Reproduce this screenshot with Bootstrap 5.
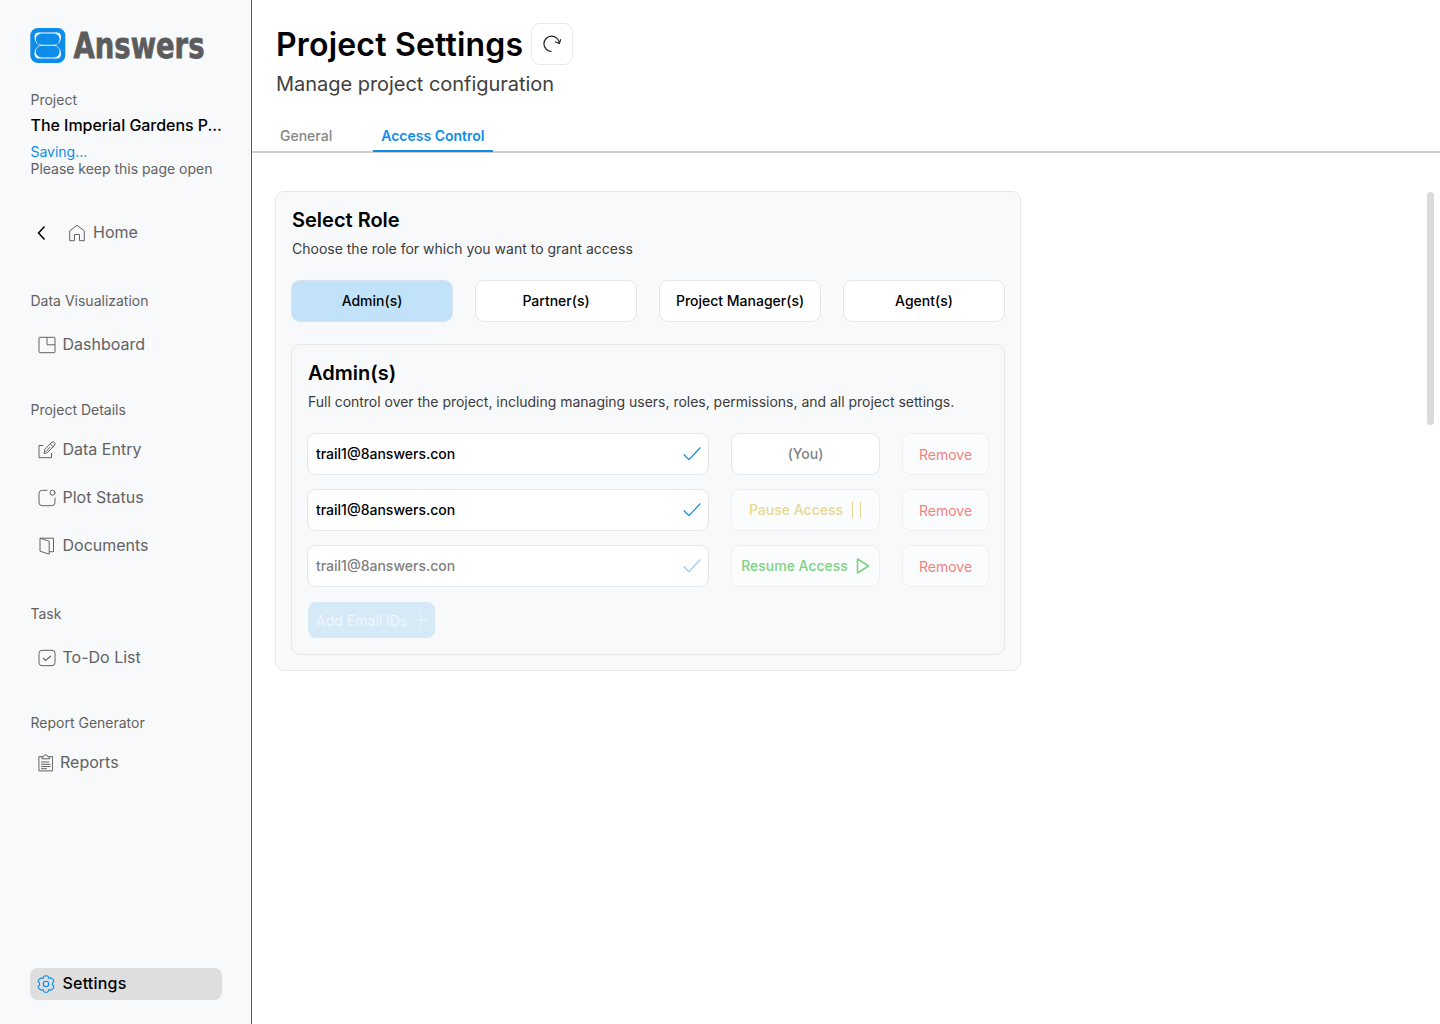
<!DOCTYPE html>
<html lang="en">
<head>
<meta charset="utf-8">
<meta name="viewport" content="width=device-width, initial-scale=1">
<title>Project Settings</title>
<link href="https://cdn.jsdelivr.net/npm/bootstrap@5.3.0/dist/css/bootstrap.min.css" rel="stylesheet">
<style>
body{font-family:Inter,"Liberation Sans",sans-serif;font-size:14px;color:#000;background:#fff;overflow:hidden}
svg{display:block;flex:none;fill:none;stroke:currentColor}
.side{width:252px;background:#f8f9fb;border-right:1px solid #5c5c5c;padding:28px 29.5px 24px 30px;color:#626262}
.brand-row{height:35px;margin-bottom:28px}
.brand-row svg{stroke:none;overflow:visible}
.side-label,.save-note{padding-left:.5px}
.side-label{line-height:18px;height:18px}
.proj-name{font-size:16px;font-weight:500;line-height:20px;margin-top:6px;padding-left:.5px;letter-spacing:-.04px}
.save-note{line-height:17px;margin-top:8px;margin-bottom:1px;letter-spacing:-.02px}
.save-note div:first-child{color:#0d8de9}
.side-item{height:32px;font-size:16px;padding-left:7.5px;border-radius:8px;color:#626262;text-decoration:none;gap:7px}
.side-item svg{margin-top:-1px}
.side-item span{line-height:24px;margin-top:-2px}
.side-item.on{background:#dddedd;color:#000;font-weight:500}
.side-item.on span{letter-spacing:.2px}
.side-item.on svg{color:#0d8de9;margin-top:0;margin-left:-.5px;margin-right:.5px}
.side-item .back{color:#000;margin-left:-.5px}
.home-ico{margin-left:14px}
.g15{margin-top:15px}.g16{margin-top:16px}.g19{margin-top:19px}.g39{margin-top:39px}.g40{margin-top:40px}.g43{margin-top:43px}
.top-area{padding:23px 24px 0}
.page-title{font-size:32px;font-weight:600;line-height:44px;height:42px;margin:0;letter-spacing:.19px}
.refresh{width:42px;height:42px;border:1px solid #e9eaea;border-radius:9px;background:#fff}
.page-sub{font-size:20px;line-height:24px;margin-top:7px;color:#404040;letter-spacing:-.03px}
.tab-row{height:33px;margin-top:24px;padding:0 20px;border-bottom:2px solid #d0d0d0}
.tab-row .nav-link{font-size:14px;font-weight:500;line-height:20px;padding:6px 8px 4px;color:#868686;height:32px;border-bottom:2px solid transparent}
.tab-row .nav-link.active{color:#0d8de9;font-weight:600;border-bottom-color:#0d8de9;margin-left:33px;width:120px}
.content-area{padding:38px 6px 0 23px}
.panel{background:#f8f9fb;border:1px solid #e6e7e9;border-radius:9px}
.role-panel{width:746px;height:480px;padding:15px}
.inner-panel{height:311px;margin-top:22px;padding:15px}
.panel h2{font-size:20px;font-weight:600;line-height:24px;margin:1px 0 0 1px}
.panel p{line-height:18px;margin:8px 0 0 1px;color:#3c3c3c}
.inner-panel p{letter-spacing:-.02px}
.box{height:42px;border:1px solid #e4e6e7;border-radius:9px;background:#fff;font-size:14px;font-weight:500;padding:0 0 1px;color:#000}
.roles{gap:22px;margin-top:22px}
.roles .box{width:162px}
.roles .box.on{background:#c2e2f9;border-color:#d9e2e8}
.rows{gap:14px;margin-top:22px}
.entry{gap:22px}
.email{width:402px;padding:0 7px 0 8px}
.email span,.act span{margin-top:-1px}
.email svg{color:#0d8de9}
.email.off{color:#808080}
.email.off svg{opacity:.45}
.act{width:149px;padding-bottom:0}
.you{color:#808080}
.pause{color:#e5d992}
.resume{color:#7fd184}
.rem{width:87px;color:#f77f80;font-weight:400;padding-top:1px;padding-bottom:0}
.dim{background:#fbfcfe;border-color:#eff0f2}
.add{width:127px;height:36px;margin:15px 0 0 1px;background:#d5e9f7;color:#f0f7fc;border:0;border-radius:8px;font-size:14px;padding:0 7px 0 8px}
.thumb{width:7px;height:233px;border-radius:4px;background:#dadada;margin-top:1px}
</style>
<script src="https://cdn.jsdelivr.net/npm/bootstrap@5.3.0/dist/js/bootstrap.bundle.min.js"></script>
</head>
<body>
<div class="d-flex vh-100">
<aside class="side d-flex flex-column flex-shrink-0">
  <div class="brand-row">
    <svg width="190" height="35" viewBox="0 0 190 35">
      <rect x=".3" width="35" height="35" rx="7.500" fill="#0d8de9"/>
      <path d="M8 4.600H27.500Q31 5 31 9Q31 15 25.500 17.300Q31 20 31 25.800Q31 30 27.500 30.400H8Q4.500 30 4.500 25.800Q4.500 20 10 17.300Q4.500 15 4.500 9Q4.500 5 8 4.600Z" fill="#fff"/>
      <rect x="5.800" y="5.500" width="23.900" height="11.300" rx="5.600" fill="#0d8de9"/>
      <rect x="5.800" y="17.800" width="23.900" height="11.600" rx="5.700" fill="#0d8de9"/>
      <text x="43.500" y="30.300" textLength="131" lengthAdjust="spacingAndGlyphs" font-family="DejaVu Sans, sans-serif" font-weight="700" font-size="36" fill="#5c5c5c" stroke="#5c5c5c" stroke-width=".8">Answers</text>
    </svg>
  </div>
  <div class="side-label">Project</div>
  <div class="proj-name text-black text-nowrap">The Imperial Gardens P...</div>
  <div class="save-note"><div>Saving...</div><div class="text-nowrap">Please keep this page open</div></div>

  <a class="side-item g39 d-flex align-items-center">
    <svg class="back" width="10" height="18" viewBox="0 0 10 18" stroke-width="1.500"><path d="M7.500 2.500L1.500 9l6 6.500"/></svg>
    <svg width="18" height="18" viewBox="0 0 18 18" class="home-ico"><path d="M1.700 6.900L9 1.300l7.300 5.600v9.800h-4.800v-6.200h-5v6.200H1.700z" stroke-linejoin="round"/></svg>
    <span>Home</span>
  </a>

  <div class="side-label g43">Data Visualization</div>
  <a class="side-item g19 d-flex align-items-center">
    <svg width="18" height="18" viewBox="0 0 18 18"><rect x="1" y="1.300" width="16" height="15.400" rx=".8"/><path d="M9 1.300v7.500h8"/></svg><span>Dashboard</span>
  </a>

  <div class="side-label g40">Project Details</div>
  <a class="side-item g15 d-flex align-items-center">
    <svg width="18" height="18" viewBox="0 0 18 18" stroke-linecap="round" stroke-linejoin="round"><path d="M5 4.500H1v12.200h12.500V12.500M6.200 12.200l.5-3.700 7-7.200q1.500-1 2.700.2 1.200 1.300.2 2.600l-7 7.300zM12.300 3l2.800 2.800M8 10.500l4-4.200"/></svg><span>Data Entry</span>
  </a>
  <a class="side-item g16 d-flex align-items-center">
    <svg width="18" height="18" viewBox="0 0 18 18" stroke-linecap="round"><path d="M9 1.300H4.200Q1 1.300 1 4.500v9Q1 16.700 4.200 16.700h9.600Q17 16.700 17 13.500V9"/><circle cx="14.500" cy="3.700" r="2.500"/></svg><span>Plot Status</span>
  </a>
  <a class="side-item g16 d-flex align-items-center">
    <svg width="18" height="18" viewBox="0 0 18 18" stroke-linejoin="round"><path d="M2 1.200l9.200 3v13l-9.200-3zM2 1.200h13.500v13.500h-4.300"/></svg><span>Documents</span>
  </a>

  <div class="side-label g43">Task</div>
  <a class="side-item g19 d-flex align-items-center">
    <svg width="18" height="18" viewBox="0 0 18 18"><rect x="1" y="1.300" width="16" height="15.400" rx="3"/><path d="M5 9l2.500 2.500L13 7" stroke-width="1.100"/></svg><span>To-Do List</span>
  </a>

  <div class="side-label g40">Report Generator</div>
  <a class="side-item g15 d-flex align-items-center">
    <svg width="15.500" height="18" viewBox="0 0 15.500 18"><path d="M4 2.700H.9v14.200h13.700V2.700h-3.200M4 4.800V2.700h1.600Q6 .7 7.700 .7T9.800 2.700h1.600v2.100z"/><path d="M3 8h8M3 10.300h9.500M3 12.600h9.500M3 14.700h6"/></svg><span>Reports</span>
  </a>

  <a class="side-item on mt-auto d-flex align-items-center">
    <svg width="18" height="18" viewBox="0 0 18 18" stroke-width="1.100" stroke-linejoin="round"><path d="M6.900 1.300Q9 .1 11.100 1.300L11.700 3.300 14 2.900Q16.400 3.800 17 6.300L15.500 8V10L17 11.700Q16.400 14.200 14 15.100L11.700 14.700 11.100 16.700Q9 17.900 6.900 16.700L6.300 14.700 4 15.100Q1.600 14.200 1 11.700L2.500 10V8L1 6.300Q1.600 3.800 4 2.900L6.300 3.300Z"/><circle cx="9" cy="9" r="2.700"/></svg><span>Settings</span>
  </a>
</aside>

<main class="flex-grow-1">
  <div class="top-area">
    <div class="d-flex gap-2">
      <h1 class="page-title">Project Settings</h1>
      <button class="btn refresh p-0 d-flex align-items-center justify-content-center" aria-label="Refresh">
        <svg width="20" height="18" viewBox="0 0 20 18" stroke-width="1.200"><path d="M9.500 16.500A7.700 7.700 0 1 1 17.300 8.400M13 6.800l4.300 1.700 1.500-4.300"/></svg>
      </button>
    </div>
    <div class="page-sub">Manage project configuration</div>
  </div>
  <nav class="nav tab-row flex-nowrap">
    <a class="nav-link">General</a>
    <a class="nav-link active">Access Control</a>
  </nav>
  <div class="content-area d-flex justify-content-between">
    <section class="panel role-panel">
      <h2>Select Role</h2>
      <p>Choose the role for which you want to grant access</p>
      <div class="roles d-flex">
        <button class="btn box on">Admin(s)</button>
        <button class="btn box">Partner(s)</button>
        <button class="btn box">Project Manager(s)</button>
        <button class="btn box">Agent(s)</button>
      </div>
      <div class="panel inner-panel">
        <h2>Admin(s)</h2>
        <p>Full control over the project, including managing users, roles, permissions, and all project settings.</p>
        <div class="rows d-flex flex-column">
          <div class="entry d-flex">
            <div class="box email d-flex align-items-center justify-content-between"><span>trail1@8answers.con</span><svg width="18" height="16" viewBox="0 0 18 16" stroke-width="1.200"><path d="M.7 8.500L6 13.700 17.300 1.500"/></svg></div>
            <div class="box act you d-flex align-items-center justify-content-center"><span>(You)</span></div>
            <button class="btn box rem dim">Remove</button>
          </div>
          <div class="entry d-flex">
            <div class="box email d-flex align-items-center justify-content-between"><span>trail1@8answers.con</span><svg width="18" height="16" viewBox="0 0 18 16" stroke-width="1.200"><path d="M.7 8.500L6 13.700 17.300 1.500"/></svg></div>
            <button class="btn box act pause dim d-flex align-items-center justify-content-center gap-2"><span>Pause Access</span><svg width="11" height="16" viewBox="0 0 11 16" stroke-width="1.200"><path d="M1.500 0v16M9.500 0v16"/></svg></button>
            <button class="btn box rem dim">Remove</button>
          </div>
          <div class="entry d-flex">
            <div class="box email off d-flex align-items-center justify-content-between"><span>trail1@8answers.con</span><svg width="18" height="16" viewBox="0 0 18 16" stroke-width="1.200"><path d="M.7 8.500L6 13.700 17.300 1.500"/></svg></div>
            <button class="btn box act resume dim d-flex align-items-center justify-content-center gap-2"><span>Resume Access</span><svg width="14" height="16" viewBox="0 0 14 16" stroke-width="1.600" stroke-linejoin="round"><path d="M1.500 1l11 7-11 7z"/></svg></button>
            <button class="btn box rem dim">Remove</button>
          </div>
        </div>
        <button class="btn add d-flex align-items-center justify-content-between">Add Email IDs<svg width="14" height="14" viewBox="0 0 14 14"><path d="M.5 7h13M7 .5v13"/></svg></button>
      </div>
    </section>
    <div class="thumb"></div>
  </div>
</main>
</div>
</body>
</html>
